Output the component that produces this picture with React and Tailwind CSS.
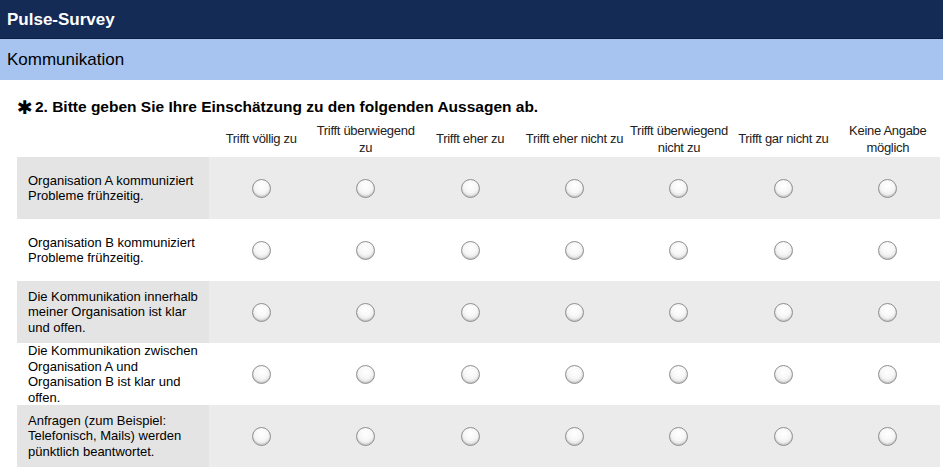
import React from "react";

const cols = [
  ["Trifft völlig zu"],
  ["Trifft überwiegend", "zu"],
  ["Trifft eher zu"],
  ["Trifft eher nicht zu"],
  ["Trifft überwiegend", "nicht zu"],
  ["Trifft gar nicht zu"],
  ["Keine Angabe", "möglich"],
];

const rows = [
  "Organisation A kommuniziert Probleme frühzeitig.",
  "Organisation B kommuniziert Probleme frühzeitig.",
  "Die Kommunikation innerhalb meiner Organisation ist klar und offen.",
  "Die Kommunikation zwischen Organisation A und Organisation B ist klar und offen.",
  "Anfragen (zum Beispiel: Telefonisch, Mails) werden pünktlich beantwortet.",
];

function Radio() {
  return (
    <span className="block w-[19px] h-[19px] rounded-full border border-[#8f8f8f] bg-[radial-gradient(circle_at_50%_35%,#ffffff_0%,#f7f7f7_45%,#d4d4d4_100%)] shadow-[inset_0_-1px_1px_rgba(0,0,0,0.15)]" />
  );
}

export default function App() {
  return (
    <div className="w-[945px] h-[472px] bg-white overflow-hidden font-['Liberation_Sans',Arial,sans-serif]">
      <div className="w-[943px] h-[39px] bg-[#142b56] border-b border-[#0e1f40] flex items-center px-[7px]">
        <span className="text-white font-bold text-[17px] leading-none">Pulse-Survey</span>
      </div>
      <div className="w-[943px] h-[41px] bg-[#a7c4f1] flex items-center px-[7px]">
        <span className="text-black text-[17px] leading-none">Kommunikation</span>
      </div>
      <div className="pl-[17px] pt-[14px] flex items-center h-[40px]">
        <span className="text-black text-[19px] leading-none mr-[2px] font-['DejaVu_Sans',sans-serif]">✱</span>
        <span className="text-black font-bold text-[15.5px] leading-none">
          2. Bitte geben Sie Ihre Einschätzung zu den folgenden Aussagen ab.
        </span>
      </div>
      <div className="ml-[17px] w-[923px] grid grid-cols-[192px_repeat(7,1fr)]">
        <div className="h-[37px]" />
        {cols.map((c, i) => (
          <div
            key={i}
            className="h-[37px] flex flex-col items-center justify-center text-[13px] leading-[17px] text-[#222222] text-center tracking-[-0.3px] whitespace-nowrap"
          >
            {c.map((l, j) => (
              <span key={j}>{l}</span>
            ))}
          </div>
        ))}
        {rows.map((r, i) => {
          const gray = i % 2 === 0;
          return (
            <React.Fragment key={i}>
              <div
                className={`h-[62px] flex items-center pl-[11px] pr-[8px] text-[13px] leading-[15.5px] text-black ${
                  gray ? "bg-[#e4e4e4]" : "bg-white"
                }`}
              >
                <span>{r}</span>
              </div>
              {cols.map((_, j) => (
                <div
                  key={j}
                  className={`h-[62px] flex items-center justify-center ${
                    gray ? "bg-[#ebebeb]" : "bg-white"
                  }`}
                >
                  <Radio />
                </div>
              ))}
            </React.Fragment>
          );
        })}
      </div>
    </div>
  );
}
